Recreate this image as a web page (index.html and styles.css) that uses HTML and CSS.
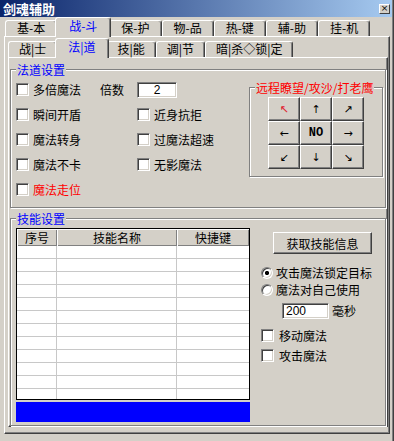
FILE: index.html
```html
<!DOCTYPE html>
<html lang="zh">
<head>
    <meta charset="UTF-8">
    <title>剑魂辅助</title>
    <link rel="stylesheet" href="styles.css">
</head>
<body>
    <div class="window">
        <div class="titlebar">
            <span class="title">剑魂辅助</span>
            <span class="close">×</span>
        </div>

        <div class="outer">
            <div class="tabstrip">
                <span class="tab">基-本</span>
                <span class="tab active">战-斗</span>
                <span class="tab">保-护</span>
                <span class="tab">物-品</span>
                <span class="tab">热-键</span>
                <span class="tab">辅-助</span>
                <span class="tab">挂-机</span>
            </div>

            <div class="panel outer-panel">
                <div class="tabstrip sub">
                    <span class="tab">战|士</span>
                    <span class="tab active">法|道</span>
                    <span class="tab">技|能</span>
                    <span class="tab">调|节</span>
                    <span class="tab">暗|杀◇锁|定</span>
                </div>

                <div class="panel inner-panel">
                    <fieldset class="group magic">
                        <legend>法道设置</legend>
                        <div class="magic-body">
                            <div class="opts">
                                <label class="check"><span class="box"></span>多倍魔法</label>
                                <span class="times">倍数</span>
                                <input class="field num" type="text" value="2">
                                <label class="check"><span class="box"></span>瞬间开盾</label>
                                <label class="check c3"><span class="box"></span>近身抗拒</label>
                                <label class="check"><span class="box"></span>魔法转身</label>
                                <label class="check c3"><span class="box"></span>过魔法超速</label>
                                <label class="check"><span class="box"></span>魔法不卡</label>
                                <label class="check c3"><span class="box"></span>无影魔法</label>
                                <label class="check red"><span class="box"></span>魔法走位</label>
                            </div>

                            <fieldset class="group dir">
                                <legend>远程瞭望/攻沙/打老鹰</legend>
                                <div class="pad">
                                    <button class="btn arrow hot">↖</button>
                                    <button class="btn arrow">↑</button>
                                    <button class="btn arrow">↗</button>
                                    <button class="btn arrow">←</button>
                                    <button class="btn no">NO</button>
                                    <button class="btn arrow">→</button>
                                    <button class="btn arrow">↙</button>
                                    <button class="btn arrow">↓</button>
                                    <button class="btn arrow">↘</button>
                                </div>
                            </fieldset>
                        </div>
                    </fieldset>

                    <fieldset class="group skills">
                        <legend>技能设置</legend>
                        <div class="skills-body">
                            <div class="skills-left">
                                <div class="list">
                                    <table>
                                        <thead>
                                            <tr><th class="col-no">序号</th><th class="col-name">技能名称</th><th>快捷键</th></tr>
                                        </thead>
                                        <tbody>
                                            <tr><td></td><td></td><td></td></tr>
                                            <tr><td></td><td></td><td></td></tr>
                                            <tr><td></td><td></td><td></td></tr>
                                            <tr><td></td><td></td><td></td></tr>
                                            <tr><td></td><td></td><td></td></tr>
                                            <tr><td></td><td></td><td></td></tr>
                                            <tr><td></td><td></td><td></td></tr>
                                            <tr><td></td><td></td><td></td></tr>
                                            <tr><td></td><td></td><td></td></tr>
                                            <tr><td></td><td></td><td></td></tr>
                                            <tr><td></td><td></td><td></td></tr>
                                            <tr><td></td><td></td><td></td></tr>
                                        </tbody>
                                    </table>
                                </div>
                                <div class="bar"></div>
                            </div>

                            <div class="skills-right">
                                <button class="btn fetch">获取技能信息</button>
                                <label class="radio-row first"><span class="radio on"></span>攻击魔法锁定目标</label>
                                <label class="radio-row"><span class="radio"></span>魔法对自己使用</label>
                                <div class="delay">
                                    <input class="field ms" type="text" value="200">
                                    <span>毫秒</span>
                                </div>
                                <label class="check move"><span class="box"></span>移动魔法</label>
                                <label class="check attack"><span class="box"></span>攻击魔法</label>
                            </div>
                        </div>
                    </fieldset>
                </div>
            </div>
        </div>
    </div>
</body>
</html>
```

FILE: styles.css
```css
* {
    box-sizing: border-box;
}

body {
    margin: 0;
    background: #d4d0c8;
    font-family: "Noto Sans CJK SC", sans-serif;
    font-size: 12px;
    color: #000;
}

.window {
    width: 394px;
    height: 441px;
    background: #d4d0c8;
    box-shadow: inset -1px 0 #404040, inset -2px 0 #808080;
    overflow: hidden;
}

/* title bar */
.titlebar {
    height: 17px;
    margin-right: 2px;
    padding: 0 2px 0 3px;
    background: linear-gradient(to right, #0a246a, #a6caf0);
    display: flex;
    align-items: center;
    justify-content: space-between;
}

.title {
    color: #fff;
    font-weight: bold;
    font-size: 13px;
    line-height: 13px;
}

.close {
    width: 11px;
    height: 10px;
    background: #d4d0c8;
    border: 1px solid;
    border-color: #fff #404040 #404040 #fff;
    font-family: "DejaVu Sans", sans-serif;
    font-size: 9px;
    line-height: 7px;
    text-align: center;
}

/* tabs */
.outer {
    margin-left: 4px;
    width: 386px;
}

.tabstrip {
    display: flex;
    align-items: flex-end;
    height: 19px;
    padding-left: 1px;
}

.tabstrip.sub {
    padding-left: 0;
}

.tab {
    height: 16px;
    padding: 0 11px;
    background: #d4d0c8;
    border: 1px solid;
    border-bottom: 0;
    border-color: #fff #404040 #fff #fff;
    border-radius: 3px 3px 0 0;
    box-shadow: inset -1px 0 #808080;
    line-height: 14px;
    white-space: nowrap;
}

.tab.active {
    height: 20px;
    margin: 0 -2px -1px;
    padding: 1px 13px 0;
    position: relative;
    color: #0000ff;
}

.sub .tab {
    padding: 0 10px;
}

.sub .tab.active {
    padding: 1px 12px 0;
}

.panel {
    border: 1px solid;
    border-color: #fff #404040 #404040 #fff;
    box-shadow: inset -1px -1px #808080;
}

.outer-panel {
    height: 398px;
    padding: 1px 1px 0 3px;
}

.inner-panel {
    padding: 5px 0 0 0;
}

/* group boxes */
.group {
    margin: 0 1px;
    padding: 0;
    min-width: 0;
    border: 1px solid #808080;
    box-shadow: 1px 1px 0 #fff, inset 1px 1px 0 #fff;
}

.group legend {
    padding: 0 1px;
    line-height: 13px;
    color: #0000ff;
    background: #d4d0c8;
}

.magic {
    padding: 1px 2px 5px 5px;
}

.magic-body {
    display: flex;
    justify-content: space-between;
    align-items: flex-start;
}

.opts {
    display: grid;
    grid-template-columns: 84px 37px auto;
    grid-auto-rows: 25px;
    align-items: center;
}

.c3 {
    grid-column: 3;
}

.check {
    display: flex;
    align-items: center;
    gap: 4px;
    white-space: nowrap;
}

.check.red {
    color: #ff0000;
}

.box {
    width: 13px;
    height: 13px;
    background: #fff;
    border: 1px solid;
    border-color: #808080 #fff #fff #808080;
    box-shadow: inset 1px 1px #404040, inset -1px -1px #d4d0c8;
}

.field {
    height: 16px;
    padding: 0 3px;
    background: #fff;
    border: 1px solid;
    border-color: #808080 #fff #fff #808080;
    box-shadow: inset 1px 1px #404040, inset -1px -1px #d4d0c8;
    font-family: "Liberation Sans", sans-serif;
    font-size: 12px;
    outline: none;
}

.num {
    width: 40px;
    text-align: center;
}

/* direction pad */
.dir {
    width: 134px;
    margin: 4px 0 0;
    padding: 0 0 7px 5px;
}

.dir legend {
    color: #ff0000;
}

.pad {
    display: grid;
    grid-template-columns: repeat(3, 32px);
    grid-auto-rows: 24px;
    margin: 3px 0 0 13px;
}

.btn {
    margin: 0;
    padding: 0;
    background: #d4d0c8;
    border: 1px solid;
    border-color: #fff #404040 #404040 #fff;
    box-shadow: inset -1px -1px #808080;
    font-family: "Noto Sans CJK SC", sans-serif;
    font-size: 12px;
    color: #000;
}

.arrow {
    font-family: "DejaVu Sans", sans-serif;
    font-size: 11px;
}

.arrow.hot {
    color: #e02030;
}

.no {
    font-family: "Liberation Mono", monospace;
    font-weight: bold;
    font-size: 12px;
}

/* skills */
.skills {
    margin-top: 4px;
    padding: 3px 0 3px 5px;
}

.skills-body {
    display: flex;
}

.skills-left {
    width: 234px;
}

.list {
    height: 172px;
    border: 1px solid #000;
    background: #fff;
    overflow: hidden;
}

.list table {
    width: 100%;
    table-layout: fixed;
    border-collapse: separate;
    border-spacing: 0;
}

.list th {
    height: 17px;
    padding: 0;
    background: #d4d0c8;
    font-weight: normal;
    line-height: 14px;
    box-shadow: inset 1px 1px #fff, inset -1px -1px #808080;
}

.col-no {
    width: 40px;
}

.col-name {
    width: 120px;
}

.list td {
    height: 13px;
    padding: 0;
    border-right: 1px solid #c8c8c8;
    border-bottom: 1px solid #c8c8c8;
}

.list td:last-child {
    border-right: 0;
}

.bar {
    height: 20px;
    margin-top: 2px;
    background: #0000ff;
}

.skills-right {
    margin-left: 11px;
    display: flex;
    flex-direction: column;
    align-items: flex-start;
}

.fetch {
    width: 99px;
    height: 22px;
    margin: 4px 0 0 12px;
}

.radio-row {
    height: 17px;
    display: flex;
    align-items: center;
    gap: 3px;
    white-space: nowrap;
}

.radio-row.first {
    margin-top: 10px;
}

.radio {
    width: 12px;
    height: 12px;
    border-radius: 50%;
    background: #fff;
    border: 1px solid;
    border-color: #808080 #fff #fff #808080;
    box-shadow: inset 1px 1px #404040, inset -1px -1px #d4d0c8;
}

.radio.on {
    background: radial-gradient(circle, #000 1.8px, #fff 2.4px);
}

.delay {
    margin: 4px 0 0 21px;
    display: flex;
    align-items: center;
    gap: 3px;
}

.ms {
    width: 47px;
}

.skills-right .check {
    height: 17px;
    gap: 5px;
}

.move {
    margin-top: 8px;
}

.attack {
    margin-top: 3px;
}
```
